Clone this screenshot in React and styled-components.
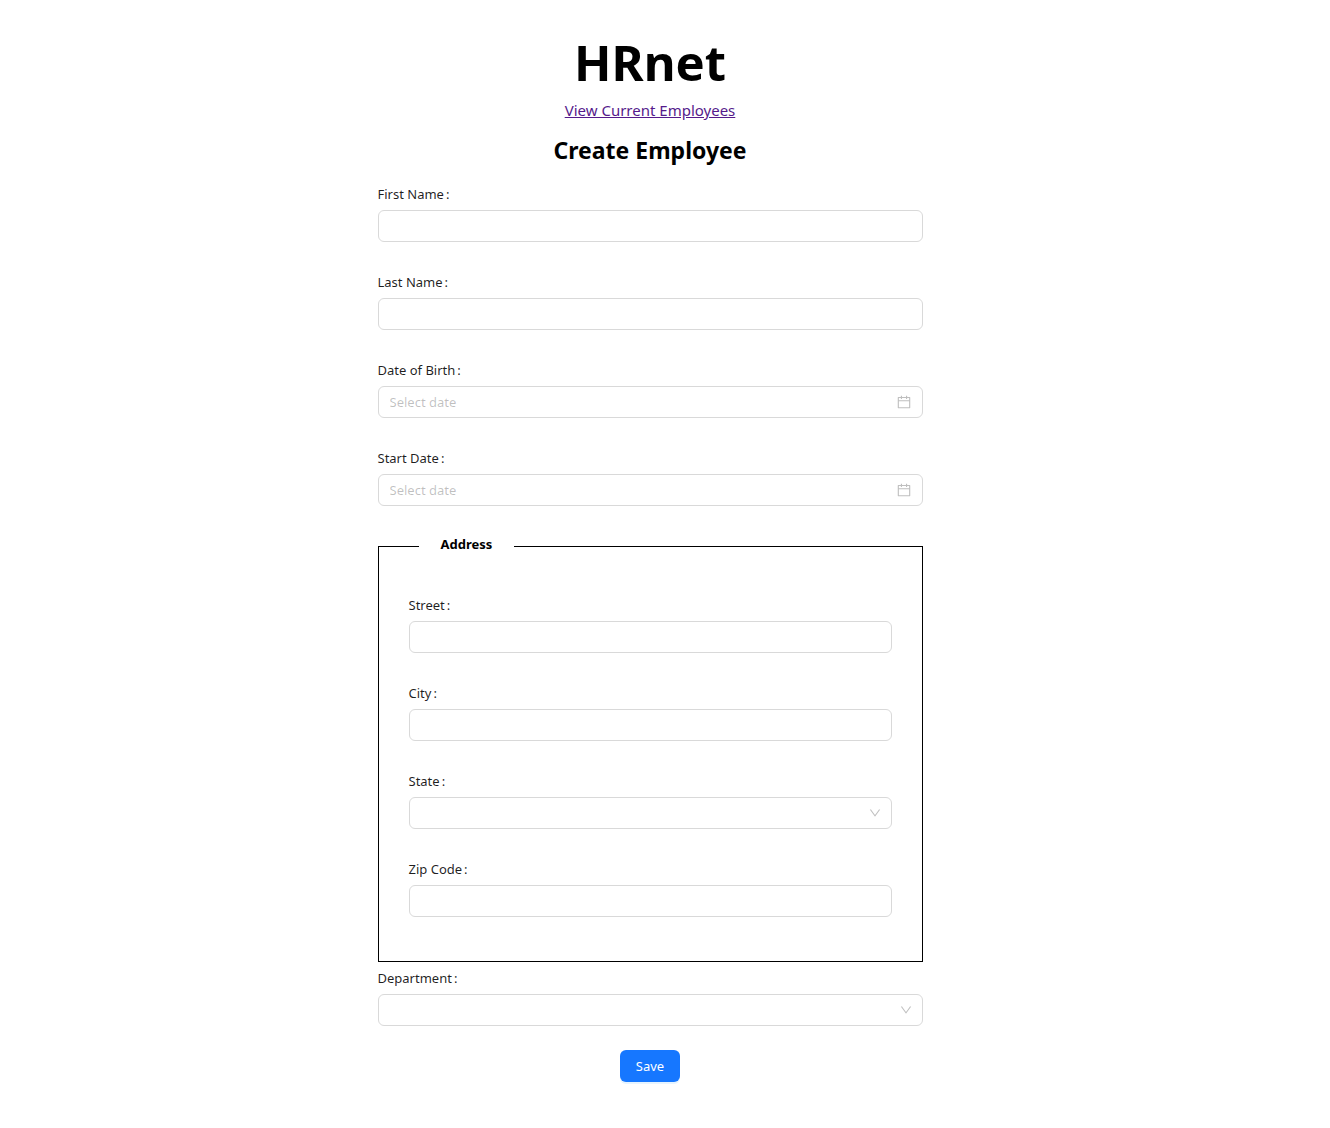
import React from "react";
import styled, { createGlobalStyle } from "styled-components";

const GlobalStyle = createGlobalStyle`
  *, *::before, *::after {
    box-sizing: border-box;
  }

  body {
    margin: 0;
    background: #fff;
    color: #000;
    font-family: "Segoe UI", "Noto Sans", "Open Sans", sans-serif;
  }
`;

const Page = styled.main`
  display: flex;
  flex-direction: column;
  align-items: center;
  padding: 28px 30px 46px 0;
`;

const Title = styled.h1`
  margin: 0 0 2px;
  font-size: 49px;
  line-height: 68px;
`;

const PageLink = styled.a`
  color: #551a8b;
  font-size: 15px;
  line-height: 24px;
`;

const Subtitle = styled.h2`
  margin: 12px 0;
  font-size: 23px;
  line-height: 32px;
`;

const Form = styled.form`
  display: flex;
  flex-direction: column;
  width: 100%;
  max-width: 545px;
`;

const FieldRow = styled.div`
  display: flex;
  flex-direction: column;
  margin-bottom: 24px;
`;

const Label = styled.label`
  align-self: flex-start;
  color: rgba(0, 0, 0, 0.88);
  font-size: 13px;
  line-height: 32px;
`;

const Colon = styled.span`
  margin-left: 2px;
`;

const ControlWrap = styled.div`
  position: relative;
  display: flex;
`;

const Input = styled.input`
  width: 100%;
  height: 32px;
  padding: 4px 11px;
  border: 1px solid #d9d9d9;
  border-radius: 6px;
  background: #fff;
  color: rgba(0, 0, 0, 0.88);
  font-family: inherit;
  font-size: 13px;
  line-height: 22px;
  outline: none;

  &::placeholder {
    color: rgba(0, 0, 0, 0.25);
    opacity: 1;
  }

  &:focus {
    border-color: #1677ff;
  }
`;

const Select = styled(Input).attrs({ as: "select" })`
  appearance: none;
  padding-right: 32px;
`;

const Icon = styled.svg`
  position: absolute;
  top: 50%;
  right: ${({ $size }) => ($size === 14 ? 12 : 11)}px;
  width: ${({ $size }) => $size}px;
  height: ${({ $size }) => $size}px;
  transform: translateY(-50%);
  fill: rgba(0, 0, 0, 0.25);
  pointer-events: none;
`;

const Fieldset = styled.fieldset`
  min-width: 0;
  margin: 0;
  padding: 27px 30px 20px;
  border: 1px solid #000;
`;

const Legend = styled.legend`
  margin-left: 10px;
  padding: 0 22px 4px;
  font-size: 13px;
  font-weight: 700;
  line-height: 28px;
`;

const SaveButton = styled.button`
  align-self: center;
  height: 32px;
  padding: 4px 16px;
  border: 0;
  border-radius: 6px;
  background: #1677ff;
  box-shadow: 0 2px 0 rgba(5, 145, 255, 0.1);
  color: #fff;
  font-family: inherit;
  font-size: 13px;
  line-height: 22px;
  cursor: pointer;
`;

const CalendarIcon = () => (
  <Icon $size={14} viewBox="64 64 896 896" aria-hidden="true">
    <path d="M880 184H712v-64c0-4.4-3.6-8-8-8h-56c-4.4 0-8 3.6-8 8v64H384v-64c0-4.4-3.6-8-8-8h-56c-4.4 0-8 3.6-8 8v64H144c-17.7 0-32 14.3-32 32v664c0 17.7 14.3 32 32 32h736c17.7 0 32-14.3 32-32V216c0-17.7-14.3-32-32-32zm-40 656H184V460h656v380zM184 392V256h128v48c0 4.4 3.6 8 8 8h56c4.4 0 8-3.6 8-8v-48h256v48c0 4.4 3.6 8 8 8h56c4.4 0 8-3.6 8-8v-48h128v136H184z" />
  </Icon>
);

const DownIcon = () => (
  <Icon $size={12} viewBox="64 64 896 896" aria-hidden="true">
    <path d="M884 256h-75c-5.1 0-9.9 2.5-12.9 6.6L512 654.2 227.9 262.6c-3-4.1-7.8-6.6-12.9-6.6h-75c-6.5 0-10.3 7.4-6.5 12.7l352.6 486.1c12.8 17.6 39 17.6 51.7 0l352.6-486.1c3.9-5.3.1-12.7-6.4-12.7z" />
  </Icon>
);

function Field({ id, label, children }) {
  return (
    <FieldRow>
      <Label htmlFor={id}>
        {label}
        <Colon>:</Colon>
      </Label>
      <ControlWrap>{children}</ControlWrap>
    </FieldRow>
  );
}

const TextField = ({ id, label }) => (
  <Field id={id} label={label}>
    <Input id={id} name={id} type="text" />
  </Field>
);

const DateField = ({ id, label }) => (
  <Field id={id} label={label}>
    <Input id={id} name={id} type="text" placeholder="Select date" autoComplete="off" />
    <CalendarIcon />
  </Field>
);

const SelectField = ({ id, label, options }) => (
  <Field id={id} label={label}>
    <Select id={id} name={id} defaultValue="">
      <option value="" />
      {options.map((option) => (
        <option key={option}>{option}</option>
      ))}
    </Select>
    <DownIcon />
  </Field>
);

export default function App() {
  return (
    <>
      <GlobalStyle />
      <Page>
        <Title>HRnet</Title>
        <PageLink href="#employees">View Current Employees</PageLink>
        <Subtitle>Create Employee</Subtitle>
        <Form onSubmit={(event) => event.preventDefault()}>
          <TextField id="firstName" label="First Name" />
          <TextField id="lastName" label="Last Name" />
          <DateField id="dateOfBirth" label="Date of Birth" />
          <DateField id="startDate" label="Start Date" />
          <Fieldset>
            <Legend>Address</Legend>
            <TextField id="street" label="Street" />
            <TextField id="city" label="City" />
            <SelectField id="state" label="State" options={[]} />
            <TextField id="zipCode" label="Zip Code" />
          </Fieldset>
          <SelectField id="department" label="Department" options={[]} />
          <SaveButton type="submit">Save</SaveButton>
        </Form>
      </Page>
    </>
  );
}
